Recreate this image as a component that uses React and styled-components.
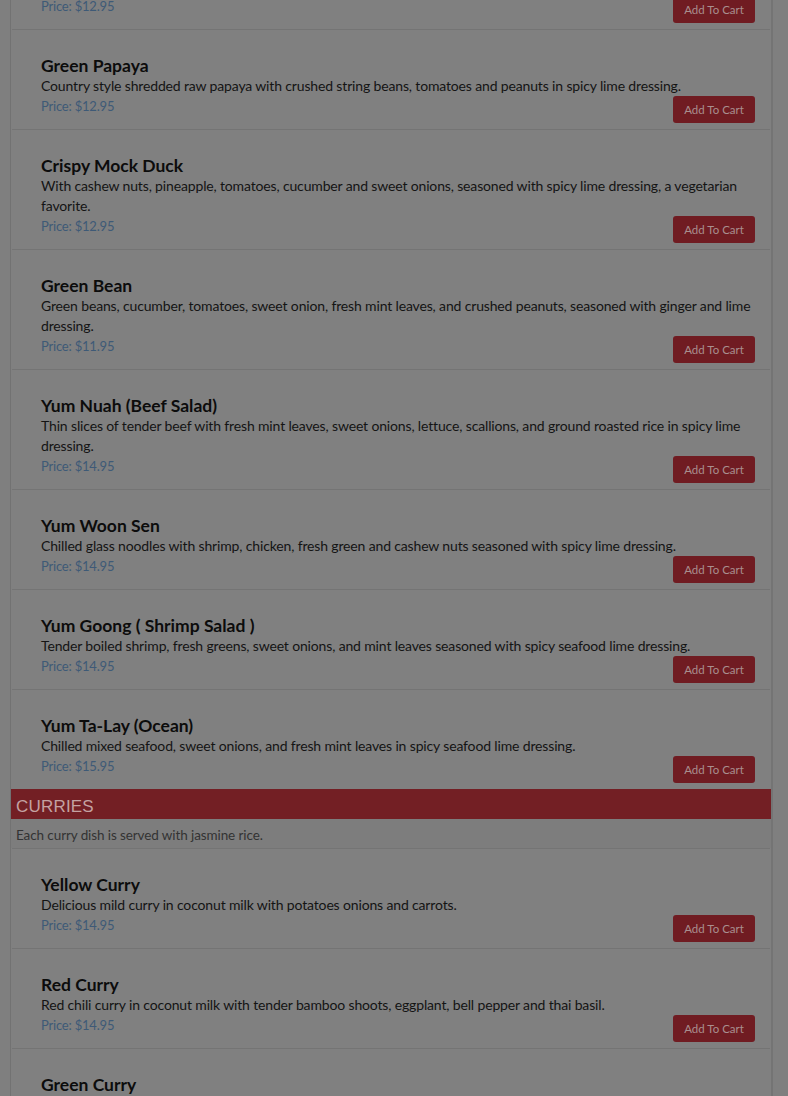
import React from "react";
import styled, { createGlobalStyle } from "styled-components";

const GlobalStyle = createGlobalStyle`
  html, body {
    margin: 0;
    padding: 0;
    background: #7f7f7f;
    font-family: Lato, "Open Sans", sans-serif;
    overflow: hidden;
  }
`;

const Menu = styled.div`
  margin: -71px 15px 0 10px;
  border-left: 1px solid #727272;
  border-right: 2px solid #747474;
  background: #808080;
`;

const Item = styled.div`
  border-top: 1px solid #747474;
  margin: 0 1px;
  padding: 26px 15px 6px 29px;
`;

const Title = styled.div`
  font-size: 17.5px;
  font-weight: 700;
  line-height: 20px;
  color: #0c0c0c;
`;

const Desc = styled.div`
  font-size: 14px;
  line-height: 20px;
  color: #141414;
  letter-spacing: -0.15px;
`;

const Row = styled.div`
  display: flex;
  justify-content: space-between;
  align-items: flex-start;
  height: 27px;
`;

const Price = styled.span`
  font-size: 13px;
  line-height: 20px;
  color: #3e5a77;
  letter-spacing: -0.2px;
`;

const Button = styled.button`
  height: 27px;
  width: 82px;
  padding: 0;
  border: none;
  border-radius: 3px;
  background: #701c22;
  color: #a98f8f;
  font-family: Lato, sans-serif;
  font-size: 11.5px;
  cursor: pointer;
`;

const SectionBar = styled.div`
  background: #731f24;
  height: 30px;
  display: flex;
  align-items: flex-end;
  padding: 0 5px 2px;
  box-sizing: border-box;
  font-family: "Liberation Sans", Arial, sans-serif;
  font-size: 17px;
  color: #c4a2a2;
  letter-spacing: 0.2px;
`;

const Note = styled.div`
  background: #7d7d7d;
  height: 27px;
  padding: 2px 5px 0;
  display: flex;
  align-items: center;
  font-size: 13.5px;
  color: #333;
  letter-spacing: -0.1px;
`;

const salads = [
  { name: "Spicy Papaya", desc: "Shredded green papaya with tomatoes and peanuts in spicy lime dressing.", price: "12.95" },
  { name: "Green Papaya", desc: "Country style shredded raw papaya with crushed string beans, tomatoes and peanuts in spicy lime dressing.", price: "12.95" },
  { name: "Crispy Mock Duck", desc: "With cashew nuts, pineapple, tomatoes, cucumber and sweet onions, seasoned with spicy lime dressing, a vegetarian favorite.", price: "12.95" },
  { name: "Green Bean", desc: "Green beans, cucumber, tomatoes, sweet onion, fresh mint leaves, and crushed peanuts, seasoned with ginger and lime dressing.", price: "11.95" },
  { name: "Yum Nuah (Beef Salad)", desc: "Thin slices of tender beef with fresh mint leaves, sweet onions, lettuce, scallions, and ground roasted rice in spicy lime dressing.", price: "14.95" },
  { name: "Yum Woon Sen", desc: "Chilled glass noodles with shrimp, chicken, fresh green and cashew nuts seasoned with spicy lime dressing.", price: "14.95" },
  { name: "Yum Goong ( Shrimp Salad )", desc: "Tender boiled shrimp, fresh greens, sweet onions, and mint leaves seasoned with spicy seafood lime dressing.", price: "14.95" },
  { name: "Yum Ta-Lay (Ocean)", desc: "Chilled mixed seafood, sweet onions, and fresh mint leaves in spicy seafood lime dressing.", price: "15.95" },
];

const curries = [
  { name: "Yellow Curry", desc: "Delicious mild curry in coconut milk with potatoes onions and carrots.", price: "14.95" },
  { name: "Red Curry", desc: "Red chili curry in coconut milk with tender bamboo shoots, eggplant, bell pepper and thai basil.", price: "14.95" },
  { name: "Green Curry", desc: "Green chili curry in coconut milk with bamboo shoots, eggplant, bell pepper and thai basil.", price: "14.95" },
];

const MenuItem = ({ item }) => (
  <Item>
    <Title>{item.name}</Title>
    <Desc>{item.desc}</Desc>
    <Row>
      <Price>Price: ${item.price}</Price>
      <Button>Add To Cart</Button>
    </Row>
  </Item>
);

const App = () => {
  return (
    <>
      <GlobalStyle />
      <Menu>
        {salads.map((s) => (
          <MenuItem key={s.name} item={s} />
        ))}
        <SectionBar>CURRIES</SectionBar>
        <Note>Each curry dish is served with jasmine rice.</Note>
        {curries.map((c) => (
          <MenuItem key={c.name} item={c} />
        ))}
      </Menu>
    </>
  );
};

export default App;
